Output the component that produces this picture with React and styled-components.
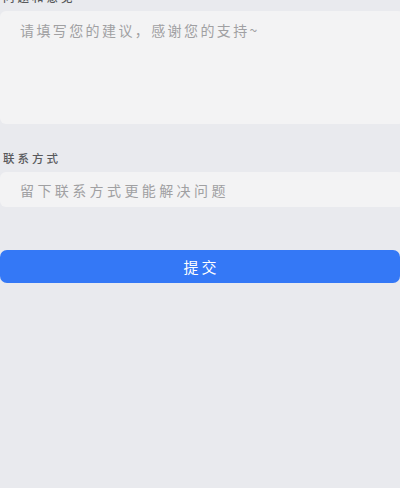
import React from "react";
import styled, { createGlobalStyle } from "styled-components";

const GlobalStyle = createGlobalStyle`
  html, body {
    margin: 0;
    padding: 0;
    background: #e9eaee;
    overflow: hidden;
  }
  body {
    font-family: "Noto Sans CJK SC", "Noto Sans", sans-serif;
  }
  textarea::placeholder, input::placeholder {
    color: #a0a0a2;
  }
`;

const Page = styled.div`
  width: 404px;
  height: 488px;
  margin-top: -9px;
  display: flex;
  flex-direction: column;
`;

const Label = styled.div`
  height: 12px;
  line-height: 12px;
  font-size: 11.5px;
  color: #58595c;
  font-weight: 500;
  letter-spacing: 3px;
  padding-left: 3px;
  margin-bottom: ${(p) => p.$gap || 8}px;
`;

const TextArea = styled.textarea`
  box-sizing: border-box;
  display: block;
  width: 100%;
  height: 113px;
  border: none;
  outline: none;
  resize: none;
  border-radius: 6px;
  background: #f3f3f4;
  padding: 7px 20px;
  font-family: inherit;
  font-size: 14px;
  line-height: 24px;
  letter-spacing: 2.4px;
  color: #333;
  margin-bottom: 28px;
`;

const Input = styled.input`
  box-sizing: border-box;
  display: block;
  width: 100%;
  height: 35px;
  border: none;
  outline: none;
  border-radius: 6px;
  background: #f3f3f4;
  padding: 0 20px;
  font-family: inherit;
  font-size: 14px;
  letter-spacing: 3.4px;
  color: #333;
  margin-bottom: 43px;
`;

const SubmitButton = styled.button`
  display: block;
  width: 400px;
  height: 33px;
  border: none;
  border-radius: 7px;
  background: #3478f6;
  color: #fff;
  font-family: inherit;
  font-size: 15px;
  letter-spacing: 3px;
  padding: 0 0 0 3px;
  cursor: pointer;
`;

export default function App() {
  return (
    <>
      <GlobalStyle />
      <Page>
        <Label $gap={8}>问题和意见</Label>
        <TextArea placeholder="请填写您的建议，感谢您的支持~" />
        <Label $gap={8}>联系方式</Label>
        <Input placeholder="留下联系方式更能解决问题" />
        <SubmitButton>提交</SubmitButton>
      </Page>
    </>
  );
}
